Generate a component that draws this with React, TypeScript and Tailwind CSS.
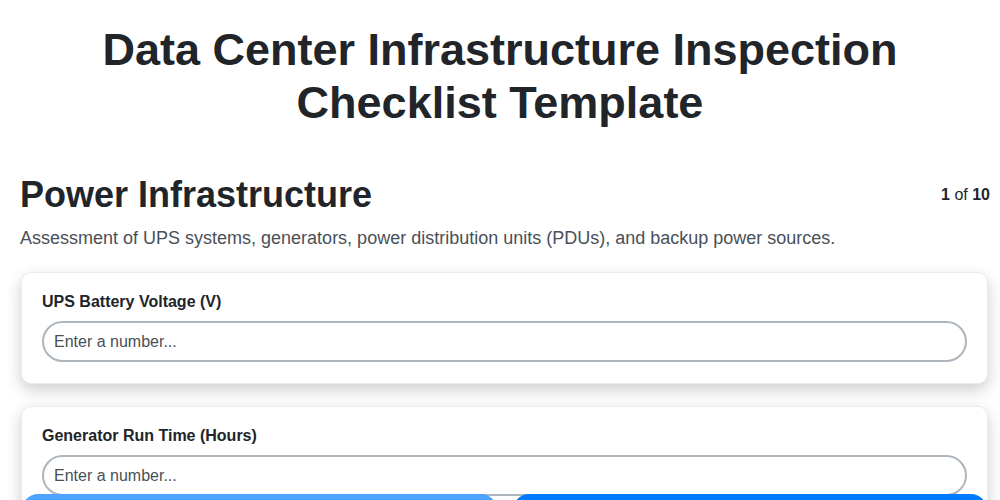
const fields = [
  { label: "UPS Battery Voltage (V)" },
  { label: "Generator Run Time (Hours)" },
];

const App = () => {
  return (
    <div className="min-h-screen bg-white pl-5 pr-[10px] font-['Liberation_Sans',Arial,sans-serif] text-[#212529]">
      <h1 className="mx-auto max-w-[840px] pr-[10px] pt-[23px] text-center text-[45px] font-bold leading-[53px]">
        Data Center Infrastructure Inspection Checklist Template
      </h1>

      <div className="mt-[44px] flex items-start justify-between">
        <h2 className="text-[36px] font-bold leading-[1.2]">Power Infrastructure</h2>
        <div className="pt-[10px] text-base">
          <span className="font-bold">1</span> of <span className="font-bold">10</span>
        </div>
      </div>
      <p className="mt-[8px] text-lg text-[#495057]">
        Assessment of UPS systems, generators, power distribution units (PDUs), and backup power sources.
      </p>

      <div className="ml-[1px] mr-[2px] mt-[20px] flex flex-col gap-[22px] pb-24">
        {fields.map((f) => (
          <div
            key={f.label}
            className="rounded-[10px] border border-[#e9ecef] bg-white px-5 pb-[21px] pt-[17px] shadow-[0_6px_16px_rgba(0,0,0,0.2)]"
          >
            <label className="block text-base font-bold">{f.label}</label>
            <input
              type="text"
              placeholder="Enter a number..."
              className="mt-[7px] h-[41px] w-full rounded-full border-2 border-[#adb5bd] bg-white px-[10px] text-base text-[#212529] placeholder:text-[#495057] outline-none"
            />
          </div>
        ))}
      </div>

      {/* nav buttons peek in at the bottom edge */}
      <div className="fixed left-0 right-0 top-[494px] flex gap-4 pl-[22px] pr-[13px]">
        <button aria-label="Previous" className="h-[50px] flex-1 rounded-t-[16px] bg-[#4da3ff]" />
        <button aria-label="Next" className="h-[50px] flex-1 rounded-t-[16px] bg-[#007bff]" />
      </div>
    </div>
  );
};

export default App;
